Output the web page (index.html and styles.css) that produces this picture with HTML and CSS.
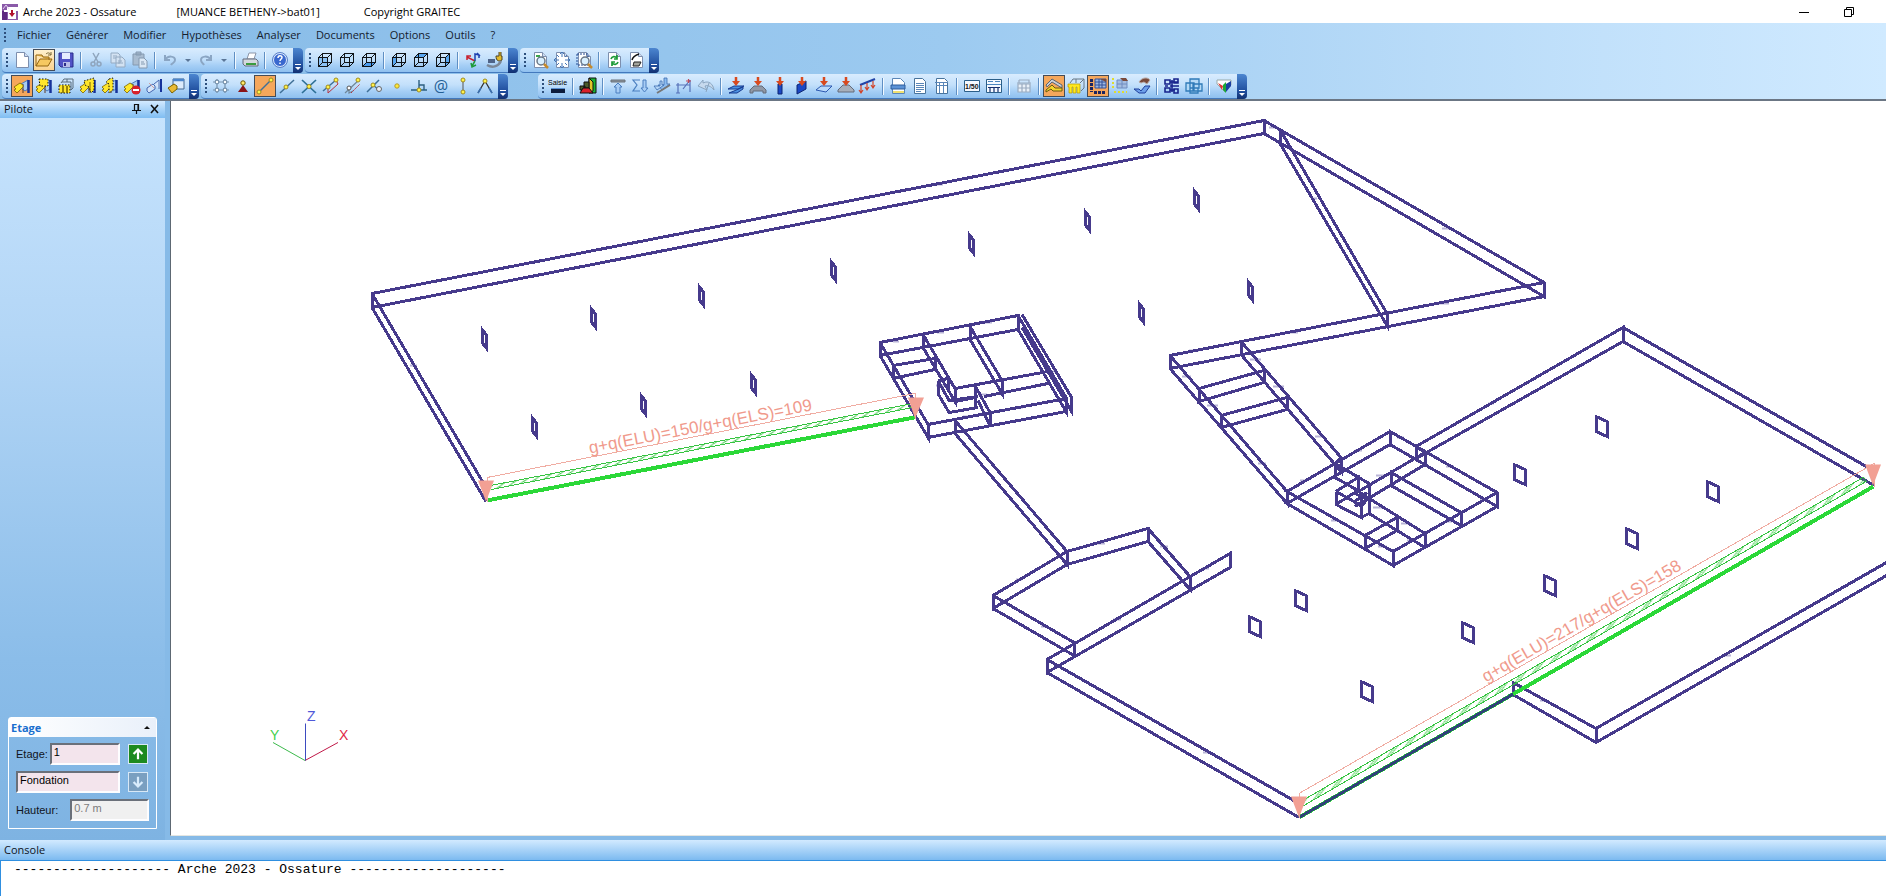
FILE: index.html
```html
<!DOCTYPE html>
<html lang="fr">
<head>
<meta charset="utf-8">
<title>Arche 2023 - Ossature</title>
<link rel="stylesheet" href="styles.css">
</head>
<body>
<svg class="defs" aria-hidden="true">
  <defs>
    <symbol id="page" viewBox="0 0 20 20"><path d="M4.500 2.500h8l4 4v11h-12z" fill="#fff" stroke="#7d8fae"/><path d="M12.500 2.500v4h4" fill="#cfdcf0" stroke="#7d8fae"/></symbol>
    <symbol id="cube" viewBox="0 0 20 20"><path d="M3.500 7.500h9v9h-9zM7.500 3.500h9v9h-9zM3.500 7.500l4-4M12.500 7.500l4-4M12.500 16.500l4-4M3.500 16.500l4-4" fill="none" stroke="#101418"/></symbol>
    <symbol id="wallA" viewBox="0 0 20 20"><path d="M9 8l7-4v9l-3 2-4-3z" fill="#a9cdf2" stroke="#4d7cbd"/><path d="M11 8v9" stroke="#5a3a2a"/><path d="M16.500 4v13" stroke="#16329a" stroke-width="2.500"/><path d="M2 11l6-4 3 2v2l-6 6-3-3 2-1z" fill="#ffe62b" stroke="#7a6200" stroke-width=".8"/></symbol>
    <symbol id="lens" viewBox="0 0 20 20"><circle cx="11" cy="11" r="4" fill="#d9f0ff" stroke="#6a7788" stroke-width="1.500"/><path d="M14 14l4 4" stroke="#c58a2c" stroke-width="2.500"/></symbol>
    <symbol id="dn" viewBox="0 0 20 20"><path d="M10 1v5" stroke="#d84a1f" stroke-width="2.500"/><path d="M6 5h8l-4 5z" fill="#d84a1f"/></symbol>
  </defs>
</svg>

<header class="titlebar">
  <svg class="app-icon" viewBox="0 0 16 16" aria-hidden="true"><path d="M0 0h16v16H0z" fill="#8a5aa8"/><path d="M0 7h5v9H0z" fill="#5f2a80"/><path d="M5 3h11v4h-2v8H6V8H2V6h3z" fill="#fff"/><path d="M1 5L4 1l3 4" stroke="#e4cff0" fill="none"/><path d="M10 6v4" stroke="#b3122c" stroke-width="2"/><path d="M7 9h6l-3 4z" fill="#b3122c"/></svg>
  <span class="t-app">Arche 2023 - Ossature</span><span class="t-doc">[MUANCE BETHENY-&gt;bat01]</span><span>Copyright GRAITEC</span>
  <div class="win-controls">
    <button aria-label="Réduire"><svg width="10" height="10" viewBox="0 0 10 10"><path d="M0 5.500h10" stroke="#000"/></svg></button>
    <button aria-label="Restaurer"><svg width="10" height="10" viewBox="0 0 10 10"><path d="M.5 2.500h7v7h-7zM2.500 2.500v-2h7v7h-2" fill="none" stroke="#000"/></svg></button>
  </div>
</header>

<div class="bars">
<nav class="menubar" aria-label="Menu"><i class="grip"></i>
  <button>Fichier</button><button>Générer</button><button>Modifier</button><button>Hypothèses</button><button>Analyser</button><button>Documents</button><button>Options</button><button>Outils</button><button>?</button>
</nav>

<div class="toolrow">
  <div class="toolbar"><i class="grip"></i>
    <button class="tb" aria-label="Nouveau"><svg viewBox="0 0 20 20"><use href="#page"/></svg></button>
    <button class="tb open" aria-label="Ouvrir"><svg viewBox="0 0 20 20"><path d="M2 5h6l1 2h6v3M2 5v11h12l4-7H6l-4 7" fill="#f6c860" stroke="#93650f"/><path d="M12 4c2-2 4-1 5 1M17 2v3h-3" fill="none" stroke="#7a6a3a"/></svg></button>
    <button class="tb" aria-label="Enregistrer"><svg viewBox="0 0 20 20"><path d="M3 3h14v14H5l-2-2z" fill="#5152c6" stroke="#2b2c8a"/><path d="M6 3h8v6H6z" fill="#e6ecff"/><path d="M7 12h7v5H7z" fill="#b9bde8"/><path d="M8 13h2v3H8z" fill="#2b2c8a"/></svg></button>
    <i class="sep"></i>
    <button class="tb" aria-label="Couper"><svg viewBox="0 0 20 20"><path d="M7 3l5 9M13 3l-5 9" stroke="#8fa5bd" stroke-width="1.500"/><g fill="none" stroke="#8fa5bd" stroke-width="1.500"><circle cx="7" cy="14" r="2"/><circle cx="13" cy="14" r="2"/></g></svg></button>
    <button class="tb" aria-label="Copier"><svg viewBox="0 0 20 20" fill="#d3e2f2" stroke="#94aac2"><path d="M3 3h7l2 2v8H3zM8 7h6l3 3v7H8zM10 11h4M10 13h5M5 6h4M5 8h3"/></svg></button>
    <button class="tb" aria-label="Coller"><svg viewBox="0 0 20 20" fill="#a9bcd0" stroke="#8499b0"><path d="M3 4h11v11H3zM6 2h5v3H6z"/><path d="M9 8h5l3 3v7H9z" fill="#dbe8f5"/><path d="M11 12h3M11 14h4"/></svg></button>
    <i class="sep"></i>
    <button class="tb" aria-label="Annuler"><svg viewBox="0 0 20 20"><path d="M5 5v5h5M5 10c3-5 10-4 10 0 0 3-3 3-4 5" fill="none" stroke="#8ba6c4" stroke-width="2"/></svg></button><i class="drop"></i>
    <button class="tb" aria-label="Rétablir"><svg viewBox="0 0 20 20"><path d="M15 5v5h-5M15 10c-3-5-10-4-10 0 0 3 2 3 3 5" fill="none" stroke="#8ba6c4" stroke-width="2"/></svg></button><i class="drop"></i>
    <i class="sep"></i>
    <button class="tb" aria-label="Imprimer"><svg viewBox="0 0 20 20"><path d="M7 9l2-6h7l-2 6z" fill="#fff" stroke="#8b95a8"/><path d="M3 9h13l2 2v5H5l-2-2z" fill="#d4d8de" stroke="#626b7c"/><path d="M6 14h10" stroke="#3a9b3f" stroke-width="2"/></svg></button>
    <i class="sep"></i>
    <button class="tb" aria-label="Aide"><svg viewBox="0 0 20 20"><circle cx="10" cy="10" r="6.500" fill="#3a68cf" stroke="#e4efff"/><circle cx="10" cy="10" r="7.500" fill="none" stroke="#5a7fc8"/><path d="M8 8c0-3 4-3 4-.5 0 1.500-2 1.500-2 3.500M10 12.500v1.500" fill="none" stroke="#fff" stroke-width="1.500"/></svg></button>
    <i class="cap"></i>
  </div>
  <div class="toolbar"><i class="grip"></i>
    <button class="tb cube" aria-label="Vue de face"><svg viewBox="0 0 20 20"><path d="M4 8h8v8H4z" fill="#8cc2f5"/><use href="#cube"/></svg></button>
    <button class="tb cube" aria-label="Vue arrière"><svg viewBox="0 0 20 20"><path d="M8 4h8v8H8z" fill="#bfe0fb"/><use href="#cube"/></svg></button>
    <button class="tb cube" aria-label="Vue de dessous"><svg viewBox="0 0 20 20"><path d="M4 16l4-4h8l-4 4z" fill="#4a9cf0"/><use href="#cube"/></svg></button>
    <i class="sep"></i>
    <button class="tb cube" aria-label="Vue de gauche"><svg viewBox="0 0 20 20"><path d="M4 16V8l4-4v8z" fill="#5aa7f0"/><use href="#cube"/></svg></button>
    <button class="tb cube" aria-label="Vue de dessus"><svg viewBox="0 0 20 20"><path d="M4 7l4-3h8l-4 3z" fill="#5aa7f0"/><use href="#cube"/></svg></button>
    <button class="tb cube" aria-label="Vue de droite"><svg viewBox="0 0 20 20"><path d="M12 16V8l4-4v8z" fill="#5aa7f0"/><use href="#cube"/></svg></button>
    <i class="sep"></i>
    <button class="tb" aria-label="Axonométrie"><svg viewBox="0 0 20 20" fill="none" stroke-width="1.500"><path d="M12 11L4 7M4 10V6h4" stroke="#c8202e"/><path d="M12 11V4l4 1v3M14 3l3 3" stroke="#1d3fb0"/><path d="M12 11l-3 5M8 13l1 4 4-2" stroke="#1f9a3a"/></svg></button>
    <button class="tb" aria-label="Vue 3D"><svg viewBox="0 0 20 20"><path d="M14 2v4h-3c0 5 3 6 6 4V6h-1V2" fill="#e2b92a" stroke="#4c4326"/><path d="M3 9h7v4H3z" fill="#4e6489"/><path d="M2 15c5 3 11 2 14-4" fill="none" stroke="#7b8797" stroke-width="2.500"/></svg></button>
    <i class="cap"></i>
  </div>
  <div class="toolbar"><i class="grip"></i>
    <button class="tb" aria-label="Zoom"><svg viewBox="0 0 20 20"><use href="#page"/><path d="M6 6h4" stroke="#3ca64a" stroke-width="2"/><use href="#lens"/></svg></button>
    <button class="tb" aria-label="Zoom tout"><svg viewBox="0 0 20 20"><use href="#page"/><path d="M10 2v5M8 4l2-2 2 2M10 18v-5M8 16l2 2 2-2M2 10h5M4 8l-2 2 2 2M18 10h-5M16 8l2 2-2 2M5 5l2 2M15 5l-2 2M5 15l2-2M15 15l-2-2" fill="none" stroke="#4476b8"/></svg></button>
    <button class="tb" aria-label="Zoom fenêtre"><svg viewBox="0 0 20 20"><use href="#page"/><path d="M3 4h11v11H3z" fill="none" stroke="#234a94" stroke-dasharray="2 1"/><use href="#lens"/></svg></button>
    <i class="sep"></i>
    <button class="tb" aria-label="Rafraîchir"><svg viewBox="0 0 20 20"><use href="#page"/><path d="M7 9c1-3 4-3 6-1M13 5v4h-3M14 12c-1 3-4 3-6 1M8 16v-4h3" fill="none" stroke="#1e9b38" stroke-width="1.700"/></svg></button>
    <button class="tb" aria-label="Effacer"><svg viewBox="0 0 20 20"><use href="#page"/><path d="M6 10c1-4 4-5 7-6" fill="none" stroke="#111" stroke-width="1.500"/><path d="M8 12h7l-2 4H7z" fill="#a5a59d" stroke="#222"/></svg></button>
    <i class="cap"></i>
  </div>
</div>

<div class="toolrow">
  <div class="toolbar"><i class="grip"></i>
    <button class="tb on" aria-label="Élément"><svg viewBox="0 0 20 20"><use href="#wallA"/></svg></button>
    <button class="tb" aria-label="Élément sélectionné"><svg viewBox="0 0 20 20"><use href="#wallA"/><path d="M5 3h9v7H6z" fill="#ffe62b" stroke="#111" stroke-dasharray="1.500 1.500"/></svg></button>
    <button class="tb" aria-label="Grille d'éléments"><svg viewBox="0 0 20 20"><path d="M3 9h11v8H3z" fill="#ffe62b" stroke="#111" stroke-dasharray="1.500 1.500"/><path d="M7 10v7M11 10v7" stroke="#7a6200" stroke-width="1.500"/><path d="M5 7l3-4h9v9l-2 2M6 6h9v7M11 3v3" fill="none" stroke="#5b6c7c"/></svg></button>
    <button class="tb" aria-label="Tout"><svg viewBox="0 0 20 20"><use href="#wallA"/><path d="M6 5l10-3v12l-3 3-2-6-4-2z" fill="#ffe62b" stroke="#111" stroke-dasharray="1.500 1.500"/><path d="M12 6v9" stroke="#7a6200"/></svg></button>
    <button class="tb" aria-label="Inverser"><svg viewBox="0 0 20 20"><use href="#wallA"/><path d="M9 3l4-1v12l-4 3V8L6 6z" fill="#ffe62b" stroke="#111" stroke-dasharray="1.500 1.500"/></svg></button>
    <button class="tb" aria-label="Exclure"><svg viewBox="0 0 20 20"><use href="#wallA"/><circle cx="14" cy="14" r="4.500" fill="#d8202a"/><path d="M11 14h6" stroke="#fff" stroke-width="2"/></svg></button>
    <button class="tb" aria-label="Désélectionner"><svg viewBox="0 0 20 20" fill="#d5e5fa" stroke="#4668b0"><path d="M3 12l6-4 2 2v3l-6 4-2-2zM10 8l5-4v9"/><path d="M5 7l5 5" stroke="#d0a0a0"/><path d="M17 3v13" stroke="#16329a" stroke-width="2"/></svg></button>
    <button class="tb" aria-label="Propriétés"><svg viewBox="0 0 20 20"><path d="M7 3h11v10H7z" fill="#dcebfb" stroke="#47698f"/><path d="M7 4h11" stroke="#4c86cc" stroke-width="2.500"/><path d="M2 12l6-4 3 2v3l-5 4z" fill="#e9ba34" stroke="#7a6200"/></svg></button>
    <i class="cap"></i>
  </div>
  <div class="toolbar"><i class="grip"></i>
    <button class="tb" aria-label="Grille"><svg viewBox="0 0 20 20" fill="none" stroke="#7893ad" stroke-width="1.200"><path d="M6 3v14M14 3v14M2 6h16M2 14h16"/><circle cx="6" cy="6" r="1.800" fill="#fff"/><circle cx="14" cy="6" r="1.800" fill="#fff"/><circle cx="6" cy="14" r="1.800" fill="#fff"/><circle cx="14" cy="14" r="1.800" fill="#fff"/></svg></button>
    <button class="tb" aria-label="Point"><svg viewBox="0 0 20 20"><path d="M5 16h10l-5-7z" fill="#8a1418"/><circle cx="10" cy="7" r="2.200" fill="#ffe96a" stroke="#6b5600"/></svg></button>
    <button class="tb on" aria-label="Extrémité"><svg viewBox="0 0 20 20"><path d="M4 16L16 4" stroke="#3f6f96" stroke-width="1.500"/><circle cx="4" cy="16" r="2" fill="#fff34a" stroke="#a08a20"/><circle cx="16" cy="4" r="2" fill="#fff34a" stroke="#a08a20"/></svg></button>
    <button class="tb" aria-label="Milieu"><svg viewBox="0 0 20 20"><path d="M3 17L17 4" stroke="#3f6f96" stroke-width="1.500"/><circle cx="9" cy="11" r="2" fill="#fff34a" stroke="#a08a20"/></svg></button>
    <button class="tb" aria-label="Intersection"><svg viewBox="0 0 20 20"><path d="M3 4l14 13M17 4L3 17" stroke="#2d6f96" stroke-width="1.700"/><circle cx="10" cy="10.500" r="2" fill="#fff34a" stroke="#a08a20"/></svg></button>
    <button class="tb" aria-label="Parallèle"><svg viewBox="0 0 20 20"><path d="M2 15L15 4" stroke="#3f6f96" stroke-width="1.500"/><path d="M7 17L17 8l-2-4M7 17v-5" stroke="#b8323e" fill="none"/><circle cx="7" cy="11" r="2" fill="#fff34a" stroke="#a08a20"/><circle cx="15" cy="4" r="2" fill="#fff34a" stroke="#a08a20"/></svg></button>
    <button class="tb" aria-label="Décalage"><svg viewBox="0 0 20 20"><path d="M2 17L16 4M6 11v6l4-2" stroke="#6f8698" fill="none" stroke-width="1.200"/><path d="M8 17L17 8" stroke="#b8323e" stroke-dasharray="2 1"/><circle cx="6" cy="12" r="2" fill="#fff" stroke="#555"/><circle cx="15" cy="4" r="2" fill="#fff34a" stroke="#a08a20"/></svg></button>
    <button class="tb" aria-label="Tangente"><svg viewBox="0 0 20 20"><path d="M2 16L14 4M8 9l6 5" stroke="#3f6f96" stroke-width="1.500"/><circle cx="8" cy="9" r="2" fill="#fff34a" stroke="#a08a20"/><circle cx="14" cy="13" r="2.500" fill="#e8eef6" stroke="#666"/></svg></button>
    <button class="tb" aria-label="Nœud"><svg viewBox="0 0 20 20"><circle cx="10" cy="10" r="2.200" fill="#ffe93a" stroke="#b09a30"/></svg></button>
    <button class="tb" aria-label="Perpendiculaire"><svg viewBox="0 0 20 20"><path d="M2 14h16M10 4v10M10 9h5v5" stroke="#2d5f80" fill="none" stroke-width="1.400"/><circle cx="10" cy="14" r="2" fill="#fff34a" stroke="#a08a20"/></svg></button>
    <button class="tb at" aria-label="Coordonnées">@</button>
    <button class="tb" aria-label="Vertical"><svg viewBox="0 0 20 20"><path d="M10 4v12" stroke="#555"/><circle cx="10" cy="4" r="2" fill="#fff34a" stroke="#a08a20"/><circle cx="10" cy="16" r="2" fill="#fff34a" stroke="#a08a20"/></svg></button>
    <button class="tb" aria-label="Angle"><svg viewBox="0 0 20 20"><path d="M3 17L10 5l7 12" stroke="#333" fill="none" stroke-width="1.300"/><path d="M6 12l-3 5M14 12l3 5" stroke="#3a6fb0" stroke-width="1.500"/><circle cx="10" cy="5" r="2" fill="#fff34a" stroke="#a08a20"/></svg></button>
    <i class="cap"></i>
  </div>
  <div class="toolbar detached"><i class="grip"></i>
    <button class="tb" aria-label="Saisie"><svg viewBox="0 0 20 20"><text x="0" y="9" class="mini">Saisie</text><path d="M3 13h14v4H3z" fill="#0d1c3c"/><path d="M3 12.500h14" stroke="#5a8fd0"/></svg></button>
    <i class="sep"></i>
    <button class="tb" aria-label="Modèle"><svg viewBox="0 0 20 20" stroke="#111"><path d="M11 2h7v15h-7z" fill="#19b233"/><path d="M11 2l4 4v9l-4 2z" fill="#e0c52a"/><path d="M6 6h5v6H6zM2 10h5v4H2z" fill="#4a5a2a"/><path d="M2 17l3-5h6l4 5z" fill="#d8202a"/></svg></button>
    <i class="sep"></i>
    <button class="tb" aria-label="Appui"><svg viewBox="0 0 20 20"><path d="M3 4h14v2H3z" fill="#8c949c" stroke="#6a727a"/><path d="M10 7l4 4h-2v6H8v-6H6z" fill="#a8cdf5" stroke="#4a7fc0"/></svg></button>
    <button class="tb" aria-label="Somme"><svg viewBox="0 0 20 20" fill="none" stroke="#4a7fc0"><path d="M10 4H3l4 5-4 6h7" stroke-width="1.200"/><path d="M13 4h3v8h2l-3.500 4-3.500-4h2z" fill="#a8cdf5"/></svg></button>
    <button class="tb" aria-label="Report de charges"><svg viewBox="0 0 20 20" stroke="#3c6cb0" stroke-width=".8"><path d="M12 2h3v6h3l-8 6-4-5h6z" fill="#8cbcf0"/><path d="M8 5h2v4h2l-7 5-3-4h6z" fill="#b4d6f7"/><path d="M5 17l13-8" stroke="#777" stroke-width="2"/></svg></button>
    <button class="tb" aria-label="Poutres"><svg viewBox="0 0 20 20" fill="none" stroke="#5570b8" stroke-width="1.200"><path d="M2 9h14M4 7v10M16 4v12M9 13l7-9M2 17h4"/><path d="M14.500 3v4M12 5h5" stroke="#c04a5a"/></svg></button>
    <button class="tb" aria-label="Rotation"><svg viewBox="0 0 20 20" fill="#c7daee" stroke="#8aa5c0"><path d="M2 10l5-6v3c6-3 10 1 11 7-3-4-7-5-9-4l2 4zM10 16l3-9"/></svg></button>
    <i class="sep"></i>
    <button class="tb" aria-label="Charge surfacique"><svg viewBox="0 0 20 20"><path d="M2 13l6-3h10l-6 3zM3 17l5-2 9-4v2l-6 4z" fill="#4b90e0" stroke="#173a90"/><use href="#dn"/></svg></button>
    <button class="tb" aria-label="Charge sur dalle"><svg viewBox="0 0 20 20"><path d="M2 14l4-4h8l4 4v3h-3v-2H5v2H2z" fill="#9098a6" stroke="#636b7a"/><use href="#dn"/></svg></button>
    <button class="tb" aria-label="Charge sur poteau"><svg viewBox="0 0 20 20"><path d="M8 8h4v10H8z" fill="#1b48c4" stroke="#0d2570"/><use href="#dn"/></svg></button>
    <button class="tb" aria-label="Charge sur voile"><svg viewBox="0 0 20 20"><path d="M5 9l9-4v8l-9 5z" fill="#1b48c4" stroke="#0d2570"/><use href="#dn"/></svg></button>
    <button class="tb" aria-label="Charge sur semelle"><svg viewBox="0 0 20 20"><path d="M2 14l5-4h11l-6 6z" fill="#b9d9fb" stroke="#2b58b0"/><use href="#dn"/></svg></button>
    <button class="tb" aria-label="Charge ponctuelle"><svg viewBox="0 0 20 20"><path d="M2 14l5-5h6l5 5v2H2z" fill="#a7afbb" stroke="#636b7a"/><use href="#dn"/></svg></button>
    <button class="tb" aria-label="Charge linéaire"><svg viewBox="0 0 20 20"><path d="M2 9l15-6" stroke="#2344a8" stroke-width="2"/><path d="M3 9v8M9 7v7M15 5v7M1 14l2 3 2-3M7 11l2 3 2-3M13 9l2 3 2-3" fill="none" stroke="#d0432a" stroke-width="1.200"/></svg></button>
    <i class="sep"></i>
    <button class="tb" aria-label="Imprimer la note"><svg viewBox="0 0 20 20"><path d="M4.500 2.500h8l4 4v11h-12z" fill="#fff" stroke="#5a86b8"/><path d="M3 9h14v4H3z" fill="#5b92d6" stroke="#2c5c9c"/><path d="M5 16h11" stroke="#f0e070" stroke-width="2"/></svg></button>
    <button class="tb" aria-label="Note"><svg viewBox="0 0 20 20"><path d="M4.500 2.500h8l3 3v12h-11z" fill="#fff" stroke="#48739c"/><path d="M6 7.500h8M6 9.500h8M6 11.500h8M6 13.500h8M6 15.500h5" stroke="#5a86b8"/></svg></button>
    <button class="tb" aria-label="Tableau"><svg viewBox="0 0 20 20"><path d="M4.500 2.500h8l3 3v12h-11z" fill="#fff" stroke="#48739c"/><path d="M3 6.500h13M7.500 6v11M11.500 6v11M4 9.500h11" stroke="#5a86b8"/></svg></button>
    <i class="sep"></i>
    <button class="tb" aria-label="Échelle 1/50"><svg viewBox="0 0 20 20"><path d="M2.500 4.500h15v11h-15z" fill="#f5f9ff" stroke="#2b5e88"/><text x="3" y="13" class="scale">1/50</text></svg></button>
    <button class="tb" aria-label="Plan"><svg viewBox="0 0 20 20"><path d="M2.500 3.500h15v13h-15z" fill="#f5f9ff" stroke="#2b5e88"/><path d="M4 5.500h5M11 5.500h5M3 8.500h14" stroke="#4c86c0"/><path d="M4 11.500h12M6 11v5M10 11v5M14 11v5" stroke="#17306f" stroke-width="1.200"/></svg></button>
    <i class="sep"></i>
    <button class="tb" aria-label="Calculatrice"><svg viewBox="0 0 20 20" fill="none" stroke="#9aabc0" stroke-width="1.200"><path d="M3 7h14M5 4h10v3M5 4v3"/><path d="M4 8h12v8H4z" fill="#e9f0f8"/><path d="M4 12h12M8 8v8M12 8v8"/></svg></button>
    <i class="sep"></i>
    <button class="tb on" aria-label="Coupe"><svg viewBox="0 0 20 20"><path d="M2 9l6-6 10 6v3L8 6l-5 5z" fill="#c9ced6" stroke="#5c6470"/><path d="M2 14l6-5 3 3h7v3H9l-2-2-5 3z" fill="#f4d52c" stroke="#6a5a10"/></svg></button>
    <button class="tb" aria-label="Structure"><svg viewBox="0 0 20 20"><path d="M4 7l3-4h11v9l-3 3M14 7l4-4M10 3v4" fill="none" stroke="#687886"/><path d="M2 8h12v9h-3v-6h-1v6H7v-6H6v6H3v-6H2z" fill="#ffe81f" stroke="#b49a00" stroke-width=".7"/></svg></button>
    <button class="tb on" aria-label="Vue filaire"><svg viewBox="0 0 20 20"><path d="M3.500 3v13M6 16.500h12" stroke="#1b2560" stroke-width="3" stroke-dasharray="3 1"/><path d="M7 3h11v9H7z" fill="#9db8e0" stroke="#33509a"/><path d="M7 6h11M7 9h11M11 3v9M14 3v9" stroke="#33509a"/><path d="M12 3h6v3z" fill="#7a4a3a"/></svg></button>
    <button class="tb" aria-label="Vue des axes"><svg viewBox="0 0 20 20"><path d="M3 2v12M4 16h13" stroke="#e0dc30" stroke-width="2" stroke-dasharray="2 2"/><path d="M7 4h10v8H7zM7 8h10M12 4v8" fill="#a5bde0" stroke="#6f8cc0"/><path d="M10 2h6l2 3h-5z" fill="#7a4a3a"/></svg></button>
    <button class="tb" aria-label="Vue en plan"><svg viewBox="0 0 20 20"><path d="M2 13h5l2 2 4-5h5l-5 7H7z" fill="#6d9fe8" stroke="#1f3f9c"/><path d="M7 6c3-5 9-5 11-2l-3 4-3-2-3 1z" fill="#7a4a3a" stroke="#b9a9a4"/></svg></button>
    <i class="sep"></i>
    <button class="tb" aria-label="Dispositions"><svg viewBox="0 0 20 20" fill="none" stroke="#17238c" stroke-width="1.600"><path d="M3 4h5v4H3zM3 12h5v4H3zM12 3h4v4h-4zM12 13h4v4h-4zM8 6h8M8 10h9M3 10h3M8 14h5M10 4v12"/></svg></button>
    <button class="tb" aria-label="Fenêtres"><svg viewBox="0 0 20 20" fill="#b4d9f6" stroke="#2f7ab8" stroke-width="1.300"><path d="M6 3h9v9H6zM2 7h8v8H2zM9 8h9v7H9zM6 12h8v5H6z"/></svg></button>
    <i class="sep"></i>
    <button class="tb" aria-label="Résultats"><svg viewBox="0 0 20 20"><path d="M3 4h14v5l-6 7-8-8z" fill="#fff" stroke="#9aa"/><path d="M4 7l5 3-1 4z" fill="#e03030"/><path d="M9 9l3-3v11l-3-3z" fill="#1aa838"/><path d="M12 8l5-3v5l-5 6z" fill="#1b3fa0"/></svg></button>
    <i class="cap"></i>
  </div>
</div>
</div>

<main class="workspace">
  <aside class="pilot">
    <div class="pane-head"><h2>Pilote</h2>
      <button aria-label="Épingler"><svg width="10" height="10" viewBox="0 0 10 10"><path d="M2.500 6V.5h4V6M6 .5V6M0 6.500h9M4.500 7v3" fill="none" stroke="#111" stroke-width="1.200"/></svg></button>
      <button aria-label="Fermer"><svg width="10" height="10" viewBox="0 0 10 10"><path d="M1 1l7 8M8 1L1 9" stroke="#111" stroke-width="1.600"/></svg></button>
    </div>
    <div class="pilot-body">
      <section class="card">
        <button class="card-head"><span>Etage</span><i class="tri"></i></button>
        <div class="card-body">
          <div class="field"><label for="etage">Etage:</label><input id="etage" value="1"><button class="step up" aria-label="Étage supérieur"><svg viewBox="0 0 18 18"><path d="M9 15V4M4 9l5-5 5 5" fill="none" stroke="#fff" stroke-width="2.500"/></svg></button></div>
          <div class="field"><input aria-label="Nom de l'étage" value="Fondation"><button class="step down" aria-label="Étage inférieur"><svg viewBox="0 0 18 18"><path d="M9 3v11M4 9l5 5 5-5" fill="none" stroke="#d9ecfc" stroke-width="2.500"/></svg></button></div>
          <div class="field height"><label for="haut">Hauteur:</label><input id="haut" value="0.7 m" disabled></div>
        </div>
      </section>
    </div>
  </aside>

  <section class="canvas" aria-label="Modèle 3D">
  <svg class="model" viewBox="171 101 1715 733" preserveAspectRatio="xMidYMid meet">
    <defs>
      <pattern id="hatchA" width="12" height="4" patternUnits="userSpaceOnUse" patternTransform="translate(0 -15)"><path d="M0 4L9 0" stroke="#35c440" fill="none"/></pattern>
      <pattern id="hatchB" width="21" height="5" patternUnits="userSpaceOnUse" patternTransform="translate(0 -13)"><path d="M0 5L12 0M5 5L17 0" stroke="#2fc93a" fill="none" stroke-width=".8"/></pattern>
    </defs>
    <g class="ticks">
      <path d="M410 365h7M978 394h9M893 341h6M937 332h7M984 322h8M936 385h9M1033 349h5M1048 371h9M1015 407h8M963 416h10M1097 543h8M1160 546h8M1016 579h6M1113 619h8M1041 626h6M1202 568h7M1203 752h8M1182 376h9M1207 405h11M1250 359h11M1273 386h11M1189 350h10M1258 463h8M1315 436h9M1287 332h11M1331 520h9M1376 475h9M1397 437h7M1446 466h8M1373 507h10M1401 523h10M1378 546h9M1488 403h6M1442 228h9M1439 303h10M937 184h6M1312 198h5M1540 700h6M1725 655h6M1480 499h7M1446 521h6M1407 540h7M1355 450h7M1300 480h7M1269 127h9"/>
    </g>
    <g class="walls">
      <path d="M372 307V293L1264 120V133L372 307M372 293L486 487M372 307L486 501"/>
      <path d="M1264 120L1544 282V296L1264 133M1544 282L1170 355V368L1544 296M1280 129V143M1280 129L1387 313V325L1280 143"/>
      <path d="M1241 341V354M1170 355L1287 491V503L1170 368M1241 341L1341 457V471L1241 354"/>
      <path d="M1199 401V388L1264 370V382zM1221 427V415L1287 397V409z"/>
      <path d="M880 355V342L1018 315V329zM880 342L928 424V437L880 355M923 334V347M970 326V339M1018 315L1066 397V411L1018 329M1022 314L1071 396V410L1022 327M928 424L1066 398M928 437L1066 411M955 420V433M990 412V425"/>
      <path d="M893 365V378L935 369V358zM923 334L955 388V401L923 347M970 326L1002 380V393L970 339M955 388L1048 371M955 401L975 397M984 396L1048 383M938 380V393L949 412L978 407M938 380L949 400L978 396M938 380L948 378V390M975 385V407M975 385L990 412M978 400L990 425"/>
      <path d="M955 420L1067 551V564L955 433M1067 551L1148 528V541L1067 564M1148 528L1190 576V589L1148 541M1067 551L993 595V608L1067 564M993 595L1074 642V655L993 608M1047 672V659L1230 553V567zM1047 659L1299 803M1047 672L1299 817"/>
      <path d="M1390 431L1497 492V506L1390 444zM1390 431L1287 491L1393 551V565L1287 503L1390 444M1393 551L1497 492M1393 565L1497 506M1461 512V525L1391 485V472zM1425 533V547M1365 535V548L1397 530V517zM1335 463V477L1358 490M1341 457L1335 463L1369 483V512"/>
      <path d="M1416 446L1623 327V341L1416 458zM1416 446L1425 452V464L1355 506M1425 452L1355 493M1336 491V504L1361 517V492M1336 491L1361 505L1369 497M1336 491L1358 477V490L1336 504M1361 517L1369 513M1355 489L1425 533M1369 513L1425 547M1355 493l12 6-6 7-6-5 12-9"/>
      <path d="M1623 327L1868 467M1623 341L1874 485M1513 694V682L1596 728L1890 560M1513 694L1596 742L1890 573M1596 728V742"/>
    </g>
    <g class="cols">
      <path d="M482 329l4 5v13l-4-5zM591 308l4 5v13l-4-5zM699 286l4 5v13l-4-5zM831 261l4 5v13l-4-5zM969 234l4 5v13l-4-5zM1085 211l4 5v13l-4-5zM1194 190l4 5v13l-4-5zM532 417l4 5v13l-4-5zM641 395l4 5v13l-4-5zM751 374l4 5v13l-4-5zM1139 303l4 5v13l-4-5zM1248 281l4 5v13l-4-5z"/>
      <path d="M1514 464l11 5v15l-11-5zM1707 481l11 5v15l-11-5zM1626 528l11 5v15l-11-5zM1544 575l11 5v15l-11-5zM1462 622l11 5v15l-11-5zM1361 681l11 5v15l-11-5zM1295 590l11 5v15l-11-5zM1249 616l11 5v15l-11-5zM1596 416l11 5v15l-11-5z"/>
    </g>
    <g transform="translate(487 501) rotate(-11)">
      <path d="M6 -15H436V-11H6z" fill="url(#hatchA)"/><path class="strip" d="M6 -15H436M6 -11H436"/>
      <path class="load" d="M0 -1H436"/>
    </g>
    <g transform="translate(1299 817) rotate(-29.950)">
      <path d="M8 -13H660V-8H8z" fill="url(#hatchB)"/><path class="strip" d="M8 -13H660M8 -8H660"/>
      <path class="load" d="M0 0H247"/><path class="base" d="M0 0H247"/><path class="load" d="M247 0H663"/>
    </g>
    <path class="rays" d="M487 501V477L915 393V418M1299 817V793L1874 463V486"/>
    <path class="heads" d="M478 480h16l-8 21zM908 397h16l-9 21zM1291 796h16l-8 21zM1865 464h16l-8 21z"/>
    <text class="load-text" transform="translate(590 453) rotate(-11)">g+q(ELU)=150/g+q(ELS)=109</text>
    <text class="load-text" transform="translate(1486 682) rotate(-30)">g+q(ELU)=217/g+q(ELS)=158</text>
    <g class="axes">
      <path d="M305 760L273 742" stroke="#3cba4c"/><path d="M305 760L338 742" stroke="#c01848"/><path d="M305.500 760V723" stroke="#3d4bc0"/>
      <text x="270" y="739" fill="#3fd04c">Y</text><text x="307" y="720" fill="#5058d8">Z</text><text x="339" y="739" fill="#e02848">X</text>
    </g>
  </svg>
  </section>
</main>

<section class="console">
  <h2>Console</h2>
  <pre>-------------------- Arche 2023 - Ossature --------------------</pre>
</section>
</body>
</html>
```
FILE: styles.css
```css
* { box-sizing: border-box; }
html, body { height: 100%; margin: 0; }
body {
  display: flex; flex-direction: column; overflow: hidden;
  background: #86bae7; color: #10141c;
  font: 11px/16px "Open Sans", "Noto Sans", sans-serif;
}
button { border: 0; padding: 0; background: none; font: inherit; color: inherit; }
h2 { margin: 0; font: inherit; }
.defs { display: none; }

.titlebar { display: flex; align-items: center; height: 23px; background: #fff; padding-left: 2px; color: #000; flex: none; }
.app-icon { width: 16px; height: 16px; margin-right: 5px; }
.t-app { margin-right: 40px; }
.t-doc { margin-right: 44px; }
.win-controls { margin-left: auto; display: flex; height: 100%; padding-right: 15px; }
.win-controls button { width: 45px; display: grid; place-items: center; }

.bars {
  flex: none; display: flex; flex-direction: column; gap: 1px;
  background: linear-gradient(90deg, #84b9e6 0, #9ccaf0 50%, #c2e1fb 85%, #d0eaff 100%);
  border-bottom: 2px solid #6b7684;
}
.menubar { display: flex; align-items: center; height: 24px; color: #14202e; }
.menubar .grip { margin: 0 11px 0 4px; }
.menubar button { margin-right: 15px; }

.grip { width: 2px; height: 14px; margin: 0 3px 0 4px; flex: none; background: repeating-linear-gradient(#2d4f7c 0 2px, transparent 2px 4px); }
.toolrow { display: flex; gap: 2px; padding-left: 2px; height: 25px; }
.toolbar {
  display: flex; align-items: center; height: 25px; border-radius: 4px;
  background: linear-gradient(#d9ecfe 0, #c3e0fb 45%, #a3cdf5 75%, #8fc0ef 100%);
  border-bottom: 1px solid #4379bd;
}
.detached { margin-left: 28px; }
.tb { width: 22px; height: 22px; display: grid; place-items: center; flex: none; }
.tb svg { width: 20px; height: 20px; }
.cube svg { shape-rendering: crispEdges; }
.tb.on { background: #f5a75c; border: 1px solid #444c58; }
.tb.open { background: linear-gradient(#fff0cc, #fbd38e); border: 1px solid #444c58; }
.at { font-size: 16px; color: #235f96; }
.mini { font: 7px/8px "Liberation Sans", sans-serif; fill: #000; }
.scale { font: bold 7px/8px "Liberation Sans", sans-serif; fill: #111; }
.sep { width: 2px; height: 17px; margin: 0 3px; flex: none; background: linear-gradient(90deg, #5f8fc4 50%, #f2f9ff 50%); }
.drop { width: 14px; flex: none; display: grid; place-items: center; }
.drop::after { content: ""; border: 3px solid transparent; border-top-color: #5b7697; border-bottom: 0; }
.cap {
  width: 10px; height: 25px; margin-left: 2px; flex: none; align-self: flex-start;
  border-radius: 0 4px 4px 0; background: linear-gradient(#4c86d0, #1f4d9c 70%, #123070);
  display: flex; flex-direction: column; justify-content: flex-end; align-items: center; padding-bottom: 3px; gap: 2px;
}
.cap::before { content: ""; width: 6px; height: 1px; background: #fff; }
.cap::after { content: ""; border: 3px solid transparent; border-top-color: #fff; border-bottom: 0; }

.workspace { flex: 1; display: flex; min-height: 0; }
.pilot { width: 165px; display: flex; flex-direction: column; flex: none; }
.pane-head { display: flex; align-items: center; gap: 8px; height: 17px; padding: 0 5px 1px 4px; background: linear-gradient(#d3eaff, #7fbdf2); }
.pane-head h2 { margin-right: auto; }
.pane-head button { display: grid; width: 10px; }
.pilot-body { flex: 1; display: flex; align-items: flex-end; padding: 0 8px 11px; background: linear-gradient(#c6e3fd 0, #b3d6f6 30%, #8bbde9 75%, #7eb3e2 100%); }
.card { flex: 1; min-width: 0; border: 1px solid #fff; border-radius: 3px 3px 0 0; }
.card-head {
  display: flex; width: 100%; height: 19px; align-items: center; justify-content: space-between;
  padding: 0 6px 0 2px; font-weight: bold; color: #1b6fce;
  background: linear-gradient(90deg, #fff, #e9f0fa);
}
.tri { border: 3px solid transparent; border-bottom-color: #111; border-top: 0; }
.card-body { padding: 6px 7px 7px; display: flex; flex-direction: column; gap: 6px; font: 11px/14px "Liberation Sans", sans-serif; }
.field { display: flex; align-items: center; height: 22px; }
.field label { white-space: nowrap; padding-right: 2px; }
.field input {
  flex: 1; width: 0; min-width: 0; height: 22px; margin: 0; padding: 0 2px 4px; border: 2px solid;
  border-color: #6a707a #fdfdff #fdfdff #6a707a; background: #f3e4ec; color: #000; font: inherit; border-radius: 0;
}
.height label { padding-right: 12px; }
.height input { background: #f0f0f0; color: #7c7c7c; }
.step { width: 20px; height: 20px; margin: 0 1px 0 8px; padding: 1px; border: 1px solid #d8e8f6; flex: none; display: grid; }
.up { background: #1d8a1f; }
.down { background: #7a9fc0; }

.canvas { flex: 1; min-width: 0; margin: 0 0 4px 5px; background: #fff; border-left: 1px solid #5d6873; border-bottom: 1px solid #e4e6e2; display: flex; }
.model { width: 100%; height: 100%; display: block; }
.walls, .cols { fill: none; stroke: #463a8c; stroke-width: 3; shape-rendering: crispEdges; }
.ticks { fill: none; stroke: #b8b4d6; stroke-width: 2; }
.strip { fill: none; stroke: #35c440; stroke-width: 1; shape-rendering: crispEdges; }
.load { fill: none; stroke: #2bd838; stroke-width: 4; shape-rendering: crispEdges; }
.base { fill: none; stroke: #2f4278; stroke-width: 3; shape-rendering: crispEdges; }
.rays { fill: none; stroke: #f0aca2; stroke-width: 1; shape-rendering: crispEdges; }
.heads { fill: #f2a094; }
.load-text { font: 17px "Liberation Sans", Arial, sans-serif; fill: #f09a8c; }
.axes { font: 14px "Liberation Sans", Arial, sans-serif; fill: none; }

.console { flex: none; }
.console h2 { height: 21px; padding: 2px 4px; background: linear-gradient(#d2eaff, #7cbaf0); border-bottom: 1px solid #2f8fe0; }
.console pre {
  height: 35px; margin: 0; padding: 1px 13px; background: #fff; border-left: 1px solid #2f8fe0;
  font: 13px/16px "Liberation Mono", "Courier New", monospace; color: #000;
}
```
